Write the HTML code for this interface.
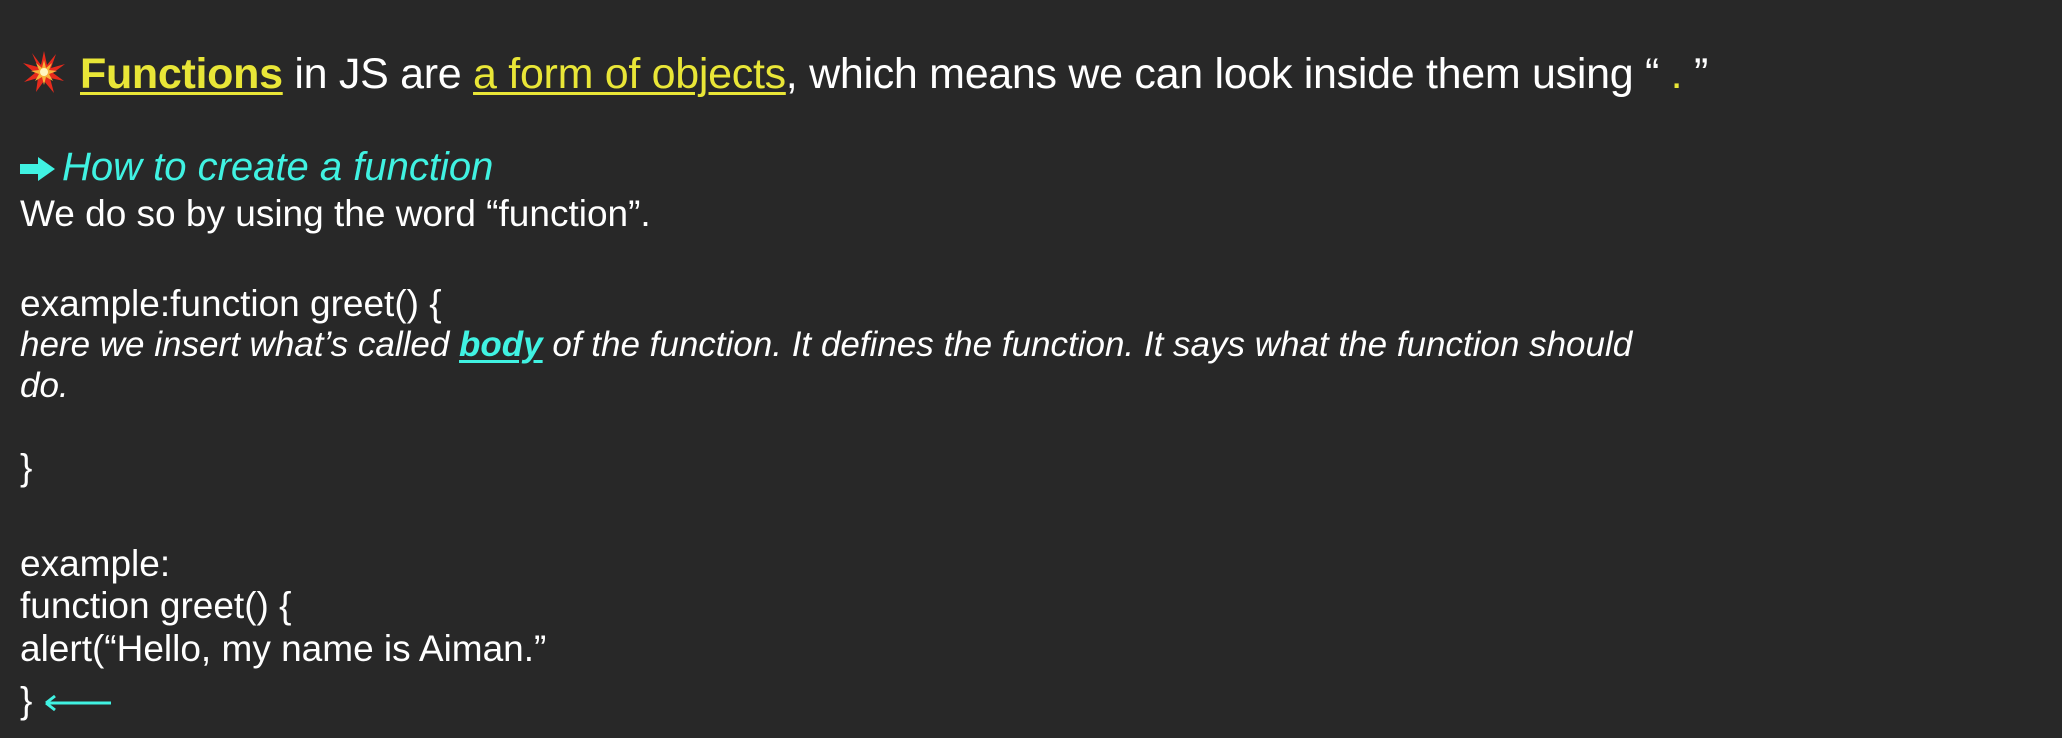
<!DOCTYPE html>
<html><head><meta charset="utf-8"><style>
html,body{margin:0;padding:0}
body{width:2062px;height:738px;background:#282828;position:relative;overflow:hidden;font-family:"Liberation Sans",sans-serif;color:#fff}
.l{position:absolute;left:20px;line-height:1;white-space:nowrap}
.y{color:#e9e637}
.c{color:#40f2e2}
u{text-decoration-thickness:3px;text-underline-offset:4px}
</style></head><body>
<div class="l" style="top:50px;left:22px;font-size:43px;letter-spacing:-0.3px">
<svg width="44" height="44" viewBox="0 0 44 44" style="vertical-align:-6px;margin-right:14px"><polygon points="22,1 25,15 34,4 29,18 43,14 31,23 42,31 28,28 32,43 22,31 14,42 16,28 2,32 13,23 1,13 16,17 10,3 19,15" fill="#e62a1c"/><polygon points="22,10 24,18 30,13 27,20 35,21 27,24 31,31 24,27 22,35 20,27 13,31 17,24 9,21 17,20 14,13 20,18" fill="#f7b23a"/><circle cx="22" cy="22" r="4" fill="#fff7c0"/></svg><b class="y"><u>Functions</u></b> in JS are <span class="y"><u>a form of objects</u></span>, which means we can look inside them using “ <span class="y">.</span> ”</div>
<div class="l c" style="top:147px;font-size:40px;font-style:italic"><svg width="36" height="26" viewBox="0 0 36 26" style="vertical-align:-2px;margin-right:6px"><polygon points="0,8 18,8 18,1 35,13 18,25 18,18 0,18" fill="#40f2e2"/></svg>How to create a function</div>
<div class="l" style="top:195px;font-size:37px">We do so by using the word “function”.</div>
<div class="l" style="top:285px;font-size:37px">example:function greet() {</div>
<div class="l" style="top:327px;font-size:35px;font-style:italic">here we insert what’s called <b class="c"><u>body</u></b> of the function. It defines the function. It says what the function should</div>
<div class="l" style="top:368px;font-size:35px;font-style:italic">do.</div>
<div class="l" style="top:449px;font-size:37px">}</div>
<div class="l" style="top:545px;font-size:37px">example:</div>
<div class="l" style="top:587px;font-size:37px">function greet() {</div>
<div class="l" style="top:630px;font-size:37px">alert(“Hello, my name is Aiman.”</div>
<div class="l" style="top:682px;font-size:37px">} <svg width="70" height="20" viewBox="0 0 70 20" style="vertical-align:0px"><path d="M3 10H68M3 10L12 3M3 10L12 17" stroke="#40f2e2" stroke-width="3" fill="none"/></svg></div>
</body></html>
